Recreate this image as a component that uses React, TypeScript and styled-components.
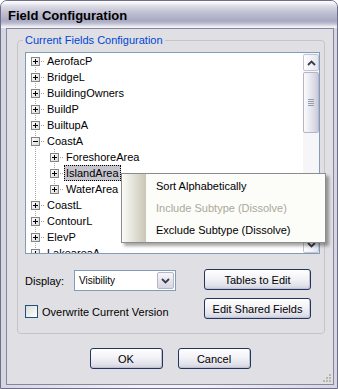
import React from "react";
import styled, { createGlobalStyle } from "styled-components";

const GlobalStyle = createGlobalStyle`
  html, body {
    margin: 0;
    padding: 0;
    background: #ffffff;
  }
  body {
    font-family: "Liberation Sans", Arial, sans-serif;
    font-size: 11px;
    color: #000000;
  }
  * {
    box-sizing: border-box;
  }
`;

interface I_TreeNode {
  label: string;
  level: 0 | 1;
  expanded?: boolean;
  selected?: boolean;
  first?: boolean;
  last?: boolean;
}

const nodes: I_TreeNode[] = [
  { label: "AerofacP", level: 0, first: true },
  { label: "BridgeL", level: 0 },
  { label: "BuildingOwners", level: 0 },
  { label: "BuildP", level: 0 },
  { label: "BuiltupA", level: 0 },
  { label: "CoastA", level: 0, expanded: true },
  { label: "ForeshoreArea", level: 1, first: true },
  { label: "IslandArea", level: 1, selected: true },
  { label: "WaterArea", level: 1, last: true },
  { label: "CoastL", level: 0 },
  { label: "ContourL", level: 0 },
  { label: "ElevP", level: 0 },
  { label: "LakeareaA", level: 0 },
];

const menuItems = [
  { label: "Sort Alphabetically", disabled: false },
  { label: "Include Subtype (Dissolve)", disabled: true },
  { label: "Exclude Subtype (Dissolve)", disabled: false },
];

const DOT = "#a3a3a3";

// dotted tree lines + the +/- box for one row
const Connector: React.FC<{ node: I_TreeNode }> = ({ node }) => {
  const width = node.level === 0 ? 19 : 38;
  const cx = node.level === 0 ? 9.5 : 28.5;
  return (
    <svg width={width} height={16} shapeRendering="crispEdges">
      <defs>
        <linearGradient id="boxFill" x1="0" y1="0" x2="1" y2="1">
          <stop offset="0" stopColor="#ffffff" />
          <stop offset="1" stopColor="#d8d8d8" />
        </linearGradient>
      </defs>
      <line
        x1={9.5}
        y1={node.level === 0 && node.first ? 8 : 0}
        x2={9.5}
        y2={16}
        stroke={DOT}
        strokeDasharray="1 1"
      />
      {node.level === 1 && (
        <line x1={28.5} y1={0} x2={28.5} y2={node.last ? 8 : 16} stroke={DOT} strokeDasharray="1 1" />
      )}
      <line x1={cx + 5} y1={8.5} x2={width} y2={8.5} stroke={DOT} strokeDasharray="1 1" />
      <rect x={cx - 4} y={4.5} width={8} height={8} fill="url(#boxFill)" stroke="#848484" />
      <line x1={cx - 2.5} y1={8.5} x2={cx + 2.5} y2={8.5} stroke="#000000" />
      {!node.expanded && <line x1={cx} y1={6} x2={cx} y2={11} stroke="#000000" />}
    </svg>
  );
};

const Chevron: React.FC<{ up?: boolean }> = ({ up }) => (
  <svg width={9} height={6} viewBox="0 0 9 6">
    <path
      d={up ? "M1 5 L4.5 1.5 L8 5" : "M1 1 L4.5 4.5 L8 1"}
      fill="none"
      stroke="#3b3b4f"
      strokeWidth={1.8}
    />
  </svg>
);

const App: React.FC = () => {
  return (
    <>
      <GlobalStyle />
      <Window>
        <TitleBar>Field Configuration</TitleBar>
        <Body>
          <Client>
            <Group>
              <GroupLegend>Current Fields Configuration</GroupLegend>
              <TreeList>
                <TreeBody>
                  {nodes.map((node) => (
                    <Row key={node.label}>
                      <Connector node={node} />
                      <NodeLabel $selected={node.selected}>{node.label}</NodeLabel>
                    </Row>
                  ))}
                </TreeBody>
                <ScrollBar>
                  <ScrollButton>
                    <Chevron up />
                  </ScrollButton>
                  <Thumb>
                    <Grip />
                  </Thumb>
                  <Track />
                  <ScrollButton>
                    <Chevron />
                  </ScrollButton>
                </ScrollBar>
              </TreeList>

              <Controls>
                <LeftColumn>
                  <DisplayRow>
                    <FieldLabel>Display:</FieldLabel>
                    <Select>
                      <SelectValue>Visibility</SelectValue>
                      <DropButton>
                        <Chevron />
                      </DropButton>
                    </Select>
                  </DisplayRow>
                  <CheckRow>
                    <CheckBox />
                    <span>Overwrite Current Version</span>
                  </CheckRow>
                </LeftColumn>
                <RightColumn>
                  <Button $width={107}>Tables to Edit</Button>
                  <Button $width={107}>Edit Shared Fields</Button>
                </RightColumn>
              </Controls>
            </Group>

            <Footer>
              <Button $width={73}>OK</Button>
              <Button $width={73}>Cancel</Button>
            </Footer>

            <ContextMenu>
              {menuItems.map((item) => (
                <MenuItem key={item.label} $disabled={item.disabled}>
                  {item.label}
                </MenuItem>
              ))}
            </ContextMenu>

            <SizeGrip width={10} height={10} viewBox="0 0 10 10">
              {[
                [7, 1],
                [4, 4],
                [7, 4],
                [1, 7],
                [4, 7],
                [7, 7],
              ].map(([x, y]) => (
                <rect key={`${x}-${y}`} x={x} y={y} width={2} height={2} fill="#b8b6ae" />
              ))}
            </SizeGrip>
          </Client>
        </Body>
      </Window>
    </>
  );
};

export default App;

const Window = styled.div`
  width: 338px;
  height: 389px;
  border: 1px solid #6e6e8a;
  border-radius: 7px 7px 0 0;
  display: flex;
  flex-direction: column;
  overflow: hidden;
  background: #e8e8f0;
`;

const TitleBar = styled.div`
  height: 27px;
  padding: 7px 0 0 7px;
  font-size: 13px;
  line-height: 15px;
  font-weight: 700;
  color: #000000;
  background: linear-gradient(
    #ffffff 0px,
    #f4f4f8 2px,
    #dcdce6 5px,
    #c2c2d4 11px,
    #b0b0c8 17px,
    #a9a9c2 20px,
    #c4c4d6 23px,
    #e6e6ee 25px,
    #f6f6fa 27px
  );
`;

const Body = styled.div`
  flex: 1;
  display: flex;
  padding: 0 3px 3px 5px;
  background: linear-gradient(to right, #d6d6e2, #f2f2f7 40%, #f2f2f7 60%, #d6d6e2);
`;

const Client = styled.div`
  position: relative;
  flex: 1;
  border: 1px solid #8585a0;
  background: #e0dfe3;
  display: flex;
  flex-direction: column;
`;

const Group = styled.fieldset`
  margin: 4px 8px 0 10px;
  padding: 5px 4px 0 7px;
  border: 1px solid #c5c5c8;
  border-radius: 4px;
  min-width: 0;
`;

const GroupLegend = styled.legend`
  padding: 0 2px;
  margin-left: -2px;
  line-height: 14px;
  color: #0046d5;
`;

const TreeList = styled.div`
  display: flex;
  height: 202px;
  border: 1px solid #7f9db9;
  background: #ffffff;
  overflow: hidden;
`;

const TreeBody = styled.div`
  flex: 1;
  overflow: hidden;
`;

const Row = styled.div`
  display: flex;
  align-items: center;
  height: 16px;
  white-space: nowrap;
`;

const NodeLabel = styled.span<{ $selected?: boolean }>`
  height: 16px;
  line-height: 14px;
  padding: 0 1px;
  border: 1px dotted ${(p) => (p.$selected ? "#000000" : "transparent")};
  background: ${(p) => (p.$selected ? "#c7c6cf" : "transparent")};
`;

const ScrollBar = styled.div`
  width: 16px;
  display: flex;
  flex-direction: column;
  background: #f6f6f8;
  padding-top: 1px;
`;

const ScrollButton = styled.div`
  height: 17px;
  display: flex;
  align-items: center;
  justify-content: center;
  border: 1px solid #c4c4d4;
  border-radius: 2px;
  background: linear-gradient(to right, #ffffff, #e4e4ee);
`;

const Thumb = styled.div`
  height: 61px;
  margin-top: 1px;
  display: flex;
  align-items: center;
  justify-content: center;
  border: 1px solid #b4b4c8;
  border-radius: 2px;
  background: linear-gradient(to right, #fbfbfd, #dcdce8 70%, #cacad9);
`;

const Grip = styled.div`
  width: 6px;
  height: 7px;
  background: repeating-linear-gradient(
    #9a9aae 0px,
    #9a9aae 1px,
    transparent 1px,
    transparent 2px
  );
`;

const Track = styled.div`
  flex: 1;
`;

const Controls = styled.div`
  display: flex;
  padding-bottom: 14px;
`;

const LeftColumn = styled.div`
  flex: 1;
  display: flex;
  flex-direction: column;
`;

const DisplayRow = styled.div`
  display: flex;
  align-items: center;
  margin-top: 16px;
`;

const FieldLabel = styled.span`
  width: 49px;
`;

const Select = styled.div`
  width: 102px;
  height: 21px;
  display: flex;
  align-items: center;
  border: 1px solid #7f9db9;
  background: #ffffff;
  padding: 1px;
`;

const SelectValue = styled.span`
  flex: 1;
  padding-left: 3px;
  font-size: 10px;
`;

const DropButton = styled.div`
  width: 17px;
  height: 17px;
  display: flex;
  align-items: center;
  justify-content: center;
  border: 1px solid #b6b6c8;
  border-radius: 2px;
  background: linear-gradient(#f6f6fa, #d6d6e2);
`;

const CheckRow = styled.div`
  display: flex;
  align-items: center;
  gap: 4px;
  margin-top: 14px;
  height: 13px;
`;

const CheckBox = styled.div`
  width: 13px;
  height: 13px;
  border: 1px solid #1c5180;
  background: linear-gradient(135deg, #dcdcd5, #f4f4f0 70%, #ffffff);
`;

const RightColumn = styled.div`
  display: flex;
  flex-direction: column;
  gap: 8px;
  margin: 15px 9px 0 0;
`;

const Button = styled.div<{ $width: number }>`
  width: ${(p) => p.$width}px;
  height: 21px;
  display: flex;
  align-items: center;
  justify-content: center;
  border: 1px solid #21355f;
  border-radius: 3px;
  background: linear-gradient(#ffffff 0%, #f4f4f8 40%, #e2e2ec 80%, #cfcfdd 100%);
  box-shadow: inset -1px -1px 0 #c2c2d2;
  color: #000000;
`;

const Footer = styled.div`
  display: flex;
  justify-content: center;
  gap: 15px;
  margin-top: 14px;
`;

const ContextMenu = styled.div`
  position: absolute;
  left: 114px;
  top: 144px;
  width: 205px;
  padding: 1px 0;
  border: 1px solid #8c8c8c;
  background: linear-gradient(to right, #fbfbf8 0px, #c9c6b6 24px, #fcfcf9 24px);
  box-shadow: 3px 3px 3px rgba(0, 0, 0, 0.35);
`;

const MenuItem = styled.div<{ $disabled?: boolean }>`
  height: 22px;
  line-height: 22px;
  padding-left: 34px;
  color: ${(p) => (p.$disabled ? "#aca899" : "#000000")};
`;

const SizeGrip = styled.svg`
  position: absolute;
  right: 1px;
  bottom: 1px;
`;
